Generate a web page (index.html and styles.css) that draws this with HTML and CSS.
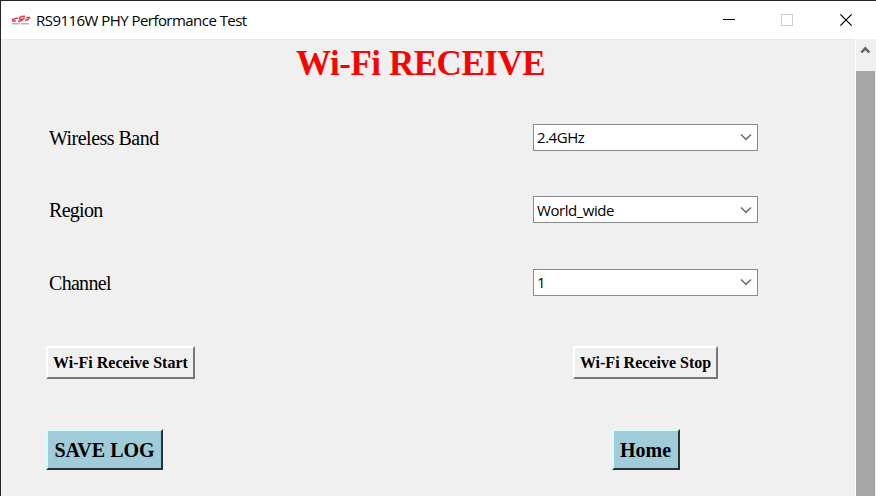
FILE: index.html
```html
<!DOCTYPE html>
<html lang="en">
<head>
<meta charset="utf-8">
<title>RS9116W PHY Performance Test</title>
<link rel="stylesheet" href="styles.css">
</head>
<body>
<div class="window">
  <header class="titlebar">
    <svg class="logo" width="20" height="10" viewBox="0 0 20 10">
      <path d="M1 5.200Q3 3 7 3.200M1 6H5M8 3.500Q9 1 14 1.300M8 3.800Q10.500 5 13 3.300M7 6.200Q11 6.600 13.500 2.500M14 5.200Q17 5.400 19 2M15.500 2.500H19" fill="none" stroke="#dc4252" stroke-width="1.500"/>
      <path d="M1 8.700H19" stroke="#b8b3b5" stroke-width="1.400" stroke-dasharray="8 1"/>
    </svg>
    <h1 class="caption">RS9116W PHY Performance Test</h1>
    <div class="controls">
      <svg width="59" height="38" viewBox="0 0 59 38"><path d="M23 18.500H35" stroke="#000"/></svg>
      <svg width="59" height="38" viewBox="0 0 59 38"><rect x="22.500" y="13.500" width="11" height="11" fill="none" stroke="#ccc"/></svg>
      <svg width="59" height="38" viewBox="0 0 59 38"><path d="M22.300 13.300L33.700 24.700M33.700 13.300L22.300 24.700" stroke="#000" stroke-width="1.200"/></svg>
    </div>
  </header>
  <div class="body">
    <main class="panel">
      <h2 class="heading">Wi-Fi RECEIVE</h2>
      <div class="form">
        <div class="label">Wireless Band</div>
        <div class="field"><div class="combo"><span>2.4GHz</span><svg width="12" height="8" viewBox="0 0 12 8"><path d="M1 1.500L6 6.300L11 1.500"/></svg></div></div>
        <div class="label short">Region</div>
        <div class="field"><div class="combo"><span>World_wide</span><svg width="12" height="8" viewBox="0 0 12 8"><path d="M1 1.500L6 6.300L11 1.500"/></svg></div></div>
        <div class="label short">Channel</div>
        <div class="field"><div class="combo"><span>1</span><svg width="12" height="8" viewBox="0 0 12 8"><path d="M1 1.500L6 6.300L11 1.500"/></svg></div></div>
        <div class="cell"><button class="btn start">Wi-Fi Receive Start</button></div>
        <div class="field"><button class="btn stop">Wi-Fi Receive Stop</button></div>
        <div class="cell"><button class="btn blue save">SAVE LOG</button></div>
        <div class="field"><button class="btn blue home">Home</button></div>
      </div>
    </main>
    <div class="scrollbar">
      <svg width="18" height="32" viewBox="0 0 18 32"><path d="M5.300 13.500L9.300 9.300L13.300 13.500" fill="none" stroke="#606060" stroke-width="2.400"/></svg>
      <div class="thumb"></div>
    </div>
  </div>
</div>
</body>
</html>
```
FILE: styles.css
```css
* { box-sizing: border-box; }
body { margin: 0; overflow: hidden; }
.window {
  width: 876px; height: 496px;
  display: flex; flex-direction: column;
  border-top: 1px solid #252326; border-left: 1px solid #252326;
  background: #fff; color: #000;
}
.titlebar { height: 38px; flex: none; display: flex; align-items: center; padding-left: 10px; }
.logo { margin-right: 5px; flex: none; }
.caption { margin: 0; padding-bottom: 1px; font: 400 15px/20px "Open Sans", "Noto Sans", sans-serif; letter-spacing: -0.54px; white-space: nowrap; }
.controls { margin: 0 -1px 0 auto; display: flex; }
.controls svg { display: block; }
.body { flex: 1; display: flex; min-height: 0; background: #f0f0f0; }
.panel { width: 854px; font-family: "Liberation Serif", serif; border-top: 1px solid #e8e8e8; overflow: hidden; }
.heading { margin: 0; height: 61px; padding: 5px 0 0 295px; font-size: 35px; line-height: 38px; letter-spacing: -0.45px; color: #f00; white-space: nowrap; }
.form {
  display: grid;
  grid-template-columns: 487px 313px;
  grid-template-rows: 72px 73px 72px 89px 85px;
  padding-left: 45px;
}
.label, .cell, .field { display: flex; align-items: center; }
.label { padding: 2px 0 0 3px; font-size: 20px; letter-spacing: -0.52px; white-space: nowrap; }
.short { letter-spacing: -0.7px; }
.field { width: 225px; justify-content: center; }
.combo {
  width: 225px; height: 27px; border: 1px solid #8a8a8a; background: #fff;
  display: flex; align-items: center; justify-content: space-between;
  padding: 0 5px 0 3px; font: 15px/20px "Open Sans", "Noto Sans", sans-serif; letter-spacing: -0.45px;
}
.combo svg { fill: none; stroke: #707070; stroke-width: 1.600; }
.btn {
  height: 33px; padding: 0; border: 2px solid; border-color: #fff #777 #777 #fff;
  background: #f0f0f0; color: #000; white-space: nowrap;
  font: 700 16px/20px "Liberation Serif", serif;
}
.start { width: 149px; }
.stop { width: 145px; }
.blue { height: 41px; background: #a0cbd9; border-color: #d5ffff #263238 #263238 #d5ffff; font-size: 20px; }
.save { width: 117px; }
.home { width: 68px; }
.scrollbar { width: 21px; display: flex; flex-direction: column; background: #f0f0f0; border-left: 1px solid #fff; border-right: 1px solid #f0f0f0; }
.scrollbar svg { display: block; flex: none; }
.thumb { flex: 1; background: #a6a6a6; }
```
